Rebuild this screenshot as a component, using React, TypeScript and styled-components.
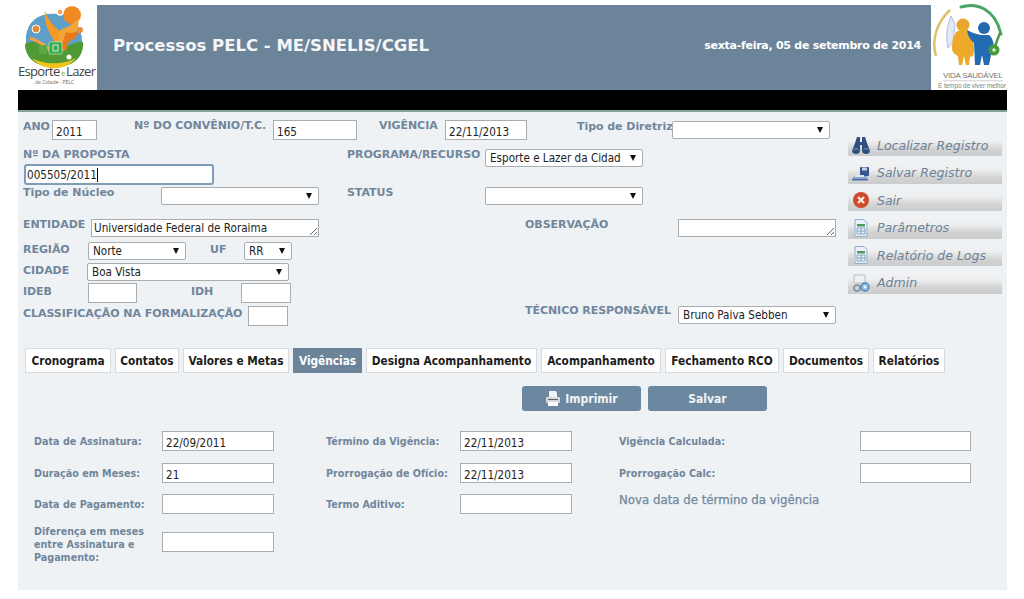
import React from 'react'
import styled, { createGlobalStyle } from 'styled-components'

const steel = '#6c8499'
const labelColor = '#71869b'
const bold = '"DejaVu Sans", Verdana, sans-serif'
const fieldFont = '"DejaVu Sans Condensed", "DejaVu Sans", sans-serif'

const GlobalStyle = createGlobalStyle`
  html, body {
    margin: 0;
    padding: 0;
    background: #fff;
  }
  body {
    width: 1024px;
    height: 599px;
    overflow: hidden;
    font-family: ${bold};
  }
`

const Page = styled.div`
  width: 989px;
  margin-left: 18px;
`

const Header = styled.header`
  display: flex;
  height: 90px;
`

const LogoSlot = styled.div<{ $w: number }>`
  width: ${({ $w }) => $w}px;
  flex-shrink: 0;
  height: 90px;
  svg {
    display: block;
  }
`

const Banner = styled.div`
  flex: 1;
  margin-top: 5px;
  background: ${steel};
  color: #fff;
  display: flex;
  align-items: center;
  justify-content: space-between;
  padding: 0 10px 4px 16px;
`

const Title = styled.h1`
  margin: 0;
  font-size: 16.5px;
  font-weight: 700;
  color: #f4f6f8;
`

const DateText = styled.span`
  font-size: 11px;
  font-weight: 700;
  letter-spacing: -0.27px;
  margin-bottom: 1px;
`

const BlackBar = styled.div`
  height: 20px;
  background: #000;
  border-bottom: 2px solid #84a09c;
`

const Panel = styled.main`
  height: 478px;
  background: #eef2f5;
`

const Top = styled.section`
  display: grid;
  grid-template-columns: 830px 154px;
  height: 226px;
`

const FormArea = styled.div`
  padding-top: 8px;
`

const Row = styled.div<{ $cols: string; $h: number }>`
  display: grid;
  grid-template-columns: ${({ $cols }) => $cols};
  height: ${({ $h }) => $h}px;
  align-items: start;
`

const Label = styled.label<{ $shift?: number }>`
  display: block;
  margin-top: ${({ $shift }) => $shift ?? 0}px;
  font-family: ${bold};
  font-size: 11px;
  line-height: 14px;
  font-weight: 700;
  letter-spacing: -0.05px;
  color: ${labelColor};
  white-space: nowrap;
`

const Field = styled.input<{ $w: number; $h?: number; $top?: number }>`
  display: block;
  box-sizing: border-box;
  width: ${({ $w }) => $w}px;
  height: ${({ $h }) => $h ?? 20}px;
  margin-top: ${({ $top }) => $top ?? 0}px;
  padding: 3px 3px 0;
  border: 1px solid #a9adb0;
  border-radius: 0;
  background: #fff;
  outline: none;
  font-family: ${fieldFont};
  font-size: 11.6px;
  color: #222;
`

const FocusField = styled.div`
  box-sizing: border-box;
  width: 190px;
  height: 21px;
  margin: 2px 0 0 1px;
  padding: 2px 0 0 1px;
  border: 2px solid #7d9cb8;
  border-radius: 3px;
  background: #fff;
  font-family: ${fieldFont};
  font-size: 11.6px;
  line-height: 14px;
  color: #222;
  display: flex;
`

const TextCaret = styled.span`
  width: 1px;
  height: 14px;
  background: #000;
`

const Area = styled.textarea<{ $w: number }>`
  display: block;
  box-sizing: border-box;
  width: ${({ $w }) => $w}px;
  height: 18px;
  padding: 1px 2px 0;
  border: 1px solid #a9adb0;
  border-radius: 0;
  background: #fff;
  outline: none;
  overflow: hidden;
  font-family: ${fieldFont};
  font-size: 11.6px;
  line-height: 15px;
  color: #222;
`

const SelectBox = styled.div<{ $w: number; $top?: number }>`
  box-sizing: border-box;
  width: ${({ $w }) => $w}px;
  height: 18px;
  margin-top: ${({ $top }) => $top ?? 0}px;
  padding: 0 6px 0 4px;
  display: flex;
  align-items: center;
  justify-content: space-between;
  border: 1px solid #a9adb0;
  border-radius: 2px;
  background: #fff;
  font-family: ${fieldFont};
  font-size: 11.6px;
  color: #222;
  white-space: nowrap;
`

const Caret = styled.span`
  width: 0;
  height: 0;
  border-left: 3.5px solid transparent;
  border-right: 3.5px solid transparent;
  border-top: 6px solid #111;
`

const Sidebar = styled.nav`
  display: flex;
  flex-direction: column;
  gap: 5.6px;
  padding-top: 22px;
`

const SideButton = styled.a`
  height: 22px;
  display: flex;
  align-items: center;
  gap: 6px;
  padding-left: 3px;
  background: linear-gradient(#f1f3f4 0%, #eceeef 35%, #d3d3d3 70%, #cbcccd 100%);
  font-family: ${bold};
  font-size: 12.5px;
  font-style: italic;
  color: #6d8296;
  white-space: nowrap;
  svg {
    flex-shrink: 0;
  }
`

const Tabs = styled.div`
  display: flex;
  gap: 4px;
  padding: 10px 0 0 7px;
`

const Tab = styled.button<{ $w: number; $active?: boolean }>`
  box-sizing: border-box;
  width: ${({ $w }) => $w}px;
  height: 25px;
  padding: 0;
  border: 1px solid ${({ $active }) => ($active ? steel : '#d9dcdf')};
  background: ${({ $active }) => ($active ? steel : '#fff')};
  color: ${({ $active }) => ($active ? '#fff' : '#1c1c1c')};
  font-family: ${fieldFont};
  font-size: 11.75px;
  font-weight: 700;
  white-space: nowrap;
`

const Actions = styled.div`
  display: flex;
  gap: 7px;
  padding: 13px 0 0 504px;
`

const ActionButton = styled.button`
  box-sizing: border-box;
  width: 119px;
  height: 25px;
  padding: 0;
  border: 0;
  border-radius: 3px;
  background: #6c88a0;
  color: #f2f4f6;
  font-family: ${fieldFont};
  font-size: 12px;
  font-weight: 700;
  display: flex;
  align-items: center;
  justify-content: center;
  gap: 4px;
`

const DatesGrid = styled.section`
  display: grid;
  grid-template-columns: 128px 112px 52px 134px 112px 47px 241px 111px;
  grid-template-rows: 32px 31px 30px 40px;
  padding: 20px 0 0 16px;
  align-items: start;
`

const DateLabel = styled.label<{ $tall?: boolean }>`
  padding-top: ${({ $tall }) => ($tall ? 1 : 4)}px;
  font-family: ${fieldFont};
  font-size: 10.7px;
  line-height: 13px;
  font-weight: 700;
  color: ${labelColor};
`

const Note = styled.span`
  font-family: ${fieldFont};
  font-size: 13.1px;
  line-height: 11px;
  font-weight: 500;
  color: ${labelColor};
  -webkit-text-stroke: 0.25px ${labelColor};
  white-space: nowrap;
`

const Select: React.FC<{ w: number; top?: number; value?: string }> = ({ w, top, value }) => (
  <SelectBox $w={w} $top={top}>
    <span>{value}</span>
    <Caret />
  </SelectBox>
)

const PelcLogo = () => (
  <svg width="79" height="90" viewBox="0 0 79 90">
    <path d="M8 36C10 20 22 12 40 14c14 2 24 12 24 28v6H8z" fill="#5d9fc9" />
    <path d="M7 44c10-6 18 2 30 4 10 2 20-8 28-6 1 14-8 25-28 25C18 67 7 58 7 44z" fill="#4f9a35" />
    <path d="M14 58c10 6 30 8 44 0-6 8-16 11-24 10-8 0-15-4-20-10z" fill="#f0c419" />
    <circle cx="54" cy="15" r="9" fill="#f08a24" />
    <circle cx="42" cy="12" r="3" fill="#f6a04c" stroke="#fff" strokeWidth="1.5" />
    <path d="M27 11c3 9 9 16 17 22l-4 14C33 36 25 24 27 11z" fill="#f59a23" />
    <path d="M42 30c6-2 12-5 18-11 2 8-2 17-10 22l-4 10-8-4z" fill="#f3a53a" />
    <path d="M48 32c4 2 9 1 14-2-2 6-6 10-11 11l-3 10-5-3z" fill="#e8791e" />
    <circle cx="62" cy="30" r="3" fill="#e7913d" />
    <circle cx="18" cy="29" r="4" fill="#e58a32" stroke="#fff" strokeWidth="1" />
    <path d="M12 38c7 3 13 5 20 12" stroke="#f0a248" strokeWidth="3" fill="none" />
    <rect x="31" y="42" width="13" height="12" rx="1" fill="#34a853" stroke="#b6e0a0" strokeWidth="0.8" />
    <rect x="35" y="45" width="5" height="6" fill="none" stroke="#d9f0c8" strokeWidth="1" />
    <rect x="21" y="45" width="8" height="9" rx="1" fill="#5ca845" />
    <circle cx="51" cy="57" r="2.5" fill="#fff" />
    <text x="0" y="76" fontFamily="'Open Sans', sans-serif" fontSize="13" fill="#444" textLength="78">
      Esporte<tspan fontSize="8" fill="#7aa83c"> e </tspan>Lazer
    </text>
    <text x="17" y="84" fontFamily="'Open Sans', sans-serif" fontSize="5" fill="#666">da Cidade - PELC</text>
  </svg>
)

const VidaLogo = () => (
  <svg width="76" height="90" viewBox="0 0 76 90">
    <path d="M30 7c16-5 34 2 40 27" stroke="#4aa564" strokeWidth="3" fill="none" strokeLinecap="round" />
    <path d="M19 10C6 22 0 40 5 56" stroke="#dcc06a" strokeWidth="2.5" fill="none" />
    <path d="M20 16c-3 8-6 18-3 32l5-6 2-18z" fill="#e4e8f2" stroke="#9fb0cf" strokeWidth="0.8" />
    <circle cx="32" cy="25" r="6.5" fill="#e9a62c" />
    <path d="M25 32c5-3 10-3 14 0 4 8 5 18 3 24l-3 1-1 8h-3l-2-9-2 9h-3l-1-9c-4-2-6-4-6-8 0-6 1-11 4-16z" fill="#eda92a" />
    <circle cx="53" cy="28" r="6" fill="#2469ad" />
    <path d="M36 30c6 3 9 4 14 5h8c4 3 5 9 5 14l-3 6-2 10h-5l-2-10-2 10h-5l-1-22c-3-3-6-6-7-13z" fill="#236bb0" />
    <circle cx="63" cy="50" r="5.5" fill="#4b9a3e" />
    <circle cx="63" cy="50" r="1.8" fill="#d8ecd0" />
    <path d="M64 46l5-13" stroke="#4b9a3e" strokeWidth="2.5" />
    <text x="12" y="78" fontFamily="'Liberation Sans', sans-serif" fontSize="8" fill="#777" textLength="60">VIDA SAUDÁVEL</text>
    <rect x="12" y="80.5" width="60" height="0.7" fill="#bbb" />
    <text x="7" y="88" fontFamily="'Liberation Sans', sans-serif" fontSize="6.5" fill="#7a8a78" textLength="68">É tempo de viver melhor</text>
  </svg>
)

const BinocularsIcon = () => (
  <svg width="20" height="18" viewBox="0 0 20 18">
    <path d="M6 1h3v5h2V1h3l2 6 3 8c0 2-2 3-4 3s-4-1-4-3V9H9v6c0 2-2 3-4 3s-4-1-4-3l3-8z" fill="#2f4f7f" />
    <path d="M2.5 14a3 3 0 0 1 5 0M12.500 14a3 3 0 0 1 5 0" stroke="#7e9cc9" fill="none" />
  </svg>
)

const SaveIcon = () => (
  <svg width="20" height="18" viewBox="0 0 20 18">
    <path d="M1 15l3-4h11l2 4z" fill="#8fa4c4" />
    <rect x="1" y="15" width="16" height="1.500" fill="#4e6ea3" />
    <rect x="9" y="3" width="9" height="9" rx="1" fill="#35558f" />
    <rect x="11" y="3.500" width="5" height="3" fill="#c5d3ea" />
    <rect x="4" y="11" width="9" height="2" fill="#dfe6f1" />
  </svg>
)

const CloseIcon = () => (
  <svg width="20" height="18" viewBox="0 0 20 18">
    <circle cx="10" cy="9" r="8" fill="#cf4a2b" />
    <path d="M7 6l6 6M13 6l-6 6" stroke="#f7e8d8" strokeWidth="2.4" />
  </svg>
)

const SheetIcon = () => (
  <svg width="20" height="18" viewBox="0 0 20 18">
    <path d="M4 0.500h9l3 3v14H4z" fill="#e9f0f7" stroke="#8fb0cf" />
    <rect x="6" y="5" width="8" height="2.500" fill="#4f9a62" />
    <path d="M6 9h8v6H6zM6 12h8M10 9v6" fill="none" stroke="#6f93b5" strokeWidth="0.8" />
  </svg>
)

const AdminIcon = () => (
  <svg width="20" height="18" viewBox="0 0 20 18">
    <path d="M3 1h11v8H3z" fill="#eef1f4" stroke="#b8c0c8" />
    <circle cx="6" cy="14" r="3" fill="none" stroke="#7e8e9e" strokeWidth="1.500" />
    <circle cx="14" cy="13" r="4" fill="#9cc0e2" stroke="#4a86bf" strokeWidth="1.500" />
    <circle cx="14" cy="13" r="1.200" fill="#fff" />
  </svg>
)

const PrintIcon = () => (
  <svg width="16" height="17" viewBox="0 0 16 17">
    <path d="M4 1h7l1 2v4H4z" fill="#f2f4f6" />
    <rect x="1" y="7" width="14" height="6" rx="1" fill="#d5dadf" />
    <rect x="3" y="12" width="10" height="4" fill="#fff" />
    <rect x="3" y="9" width="10" height="1" fill="#59636d" />
  </svg>
)

const sideItems = [
  { label: 'Localizar Registro', icon: <BinocularsIcon /> },
  { label: 'Salvar Registro', icon: <SaveIcon /> },
  { label: 'Sair', icon: <CloseIcon /> },
  { label: 'Parâmetros', icon: <SheetIcon /> },
  { label: 'Relatório de Logs', icon: <SheetIcon /> },
  { label: 'Admin', icon: <AdminIcon /> },
]

const tabs = [
  { label: 'Cronograma', w: 86 },
  { label: 'Contatos', w: 64 },
  { label: 'Valores e Metas', w: 106 },
  { label: 'Vigências', w: 69, active: true },
  { label: 'Designa Acompanhamento', w: 171 },
  { label: 'Acompanhamento', w: 120 },
  { label: 'Fechamento RCO', w: 114 },
  { label: 'Documentos', w: 86 },
  { label: 'Relatórios', w: 72 },
]

const App: React.FC = () => (
  <Page>
    <GlobalStyle />
    <Header>
      <LogoSlot $w={79}>
        <PelcLogo />
      </LogoSlot>
      <Banner>
        <Title>Processos PELC - ME/SNELIS/CGEL</Title>
        <DateText>sexta-feira, 05 de setembro de 2014</DateText>
      </Banner>
      <LogoSlot $w={76}>
        <VidaLogo />
      </LogoSlot>
    </Header>
    <BlackBar />
    <Panel>
      <Top>
        <FormArea>
          <Row $h={28} $cols="5px 29px 45px 37px 139px 84px 22px 66px 82px 50px 95px 158px">
            <span />
            <Label>ANO</Label>
            <Field $w={45} defaultValue="2011" />
            <span />
            <Label $shift={-1}>Nº DO CONVÊNIO/T.C.</Label>
            <Field $w={84} defaultValue="165" />
            <span />
            <Label $shift={-1}>VIGÊNCIA</Label>
            <Field $w={82} defaultValue="22/11/2013" />
            <span />
            <Label>Tipo de Diretriz</Label>
            <Select w={158} top={1} />
          </Row>
          <Row $h={39} $cols="5px 324px 138px 158px">
            <span />
            <div>
              <Label>Nº DA PROPOSTA</Label>
              <FocusField>
                005505/2011
                <TextCaret />
              </FocusField>
            </div>
            <Label>PROGRAMA/RECURSO</Label>
            <Select w={158} top={1} value="Esporte e Lazer da Cidad" />
          </Row>
          <Row $h={32} $cols="5px 138px 186px 138px 158px">
            <span />
            <Label $shift={-1}>Tipo de Núcleo</Label>
            <Select w={158} />
            <Label $shift={-1}>STATUS</Label>
            <Select w={158} />
          </Row>
          <Row $h={23} $cols="5px 68px 434px 153px 158px">
            <span />
            <Label $shift={-1}>ENTIDADE</Label>
            <Area $w={228} defaultValue="Universidade Federal de Roraima" />
            <Label $shift={-1}>OBSERVAÇÃO</Label>
            <Area $w={158} />
          </Row>
          <Row $h={21} $cols="5px 65px 122px 34px 48px">
            <span />
            <Label $shift={1}>REGIÃO</Label>
            <Select w={98} value="Norte" />
            <Label $shift={1}>UF</Label>
            <Select w={48} value="RR" />
          </Row>
          <Row $h={20} $cols="5px 64px 202px">
            <span />
            <Label $shift={1}>CIDADE</Label>
            <Select w={202} value="Boa Vista" />
          </Row>
          <Row $h={23} $cols="5px 65px 103px 50px 50px">
            <span />
            <Label $shift={2}>IDEB</Label>
            <Field $w={49} />
            <Label $shift={2}>IDH</Label>
            <Field $w={50} />
          </Row>
          <Row $h={22} $cols="5px 225px 277px 153px 158px">
            <span />
            <Label $shift={1}>CLASSIFICAÇÃO NA FORMALIZAÇÃO</Label>
            <Field $w={40} />
            <Label $shift={-2}>TÉCNICO RESPONSÁVEL</Label>
            <Select w={158} value="Bruno Paiva Sebben" />
          </Row>
        </FormArea>
        <Sidebar>
          {sideItems.map((item) => (
            <SideButton key={item.label}>
              {item.icon}
              {item.label}
            </SideButton>
          ))}
        </Sidebar>
      </Top>
      <Tabs>
        {tabs.map((tab) => (
          <Tab key={tab.label} $w={tab.w} $active={tab.active}>
            {tab.label}
          </Tab>
        ))}
      </Tabs>
      <Actions>
        <ActionButton>
          <PrintIcon />
          Imprimir
        </ActionButton>
        <ActionButton>Salvar</ActionButton>
      </Actions>
      <DatesGrid>
        <DateLabel>Data de Assinatura:</DateLabel>
        <Field $w={112} defaultValue="22/09/2011" />
        <span />
        <DateLabel>Término da Vigência:</DateLabel>
        <Field $w={112} defaultValue="22/11/2013" />
        <span />
        <DateLabel>Vigência Calculada:</DateLabel>
        <Field $w={111} />

        <DateLabel>Duração em Meses:</DateLabel>
        <Field $w={112} defaultValue="21" />
        <span />
        <DateLabel>Prorrogação de Ofício:</DateLabel>
        <Field $w={112} defaultValue="22/11/2013" />
        <span />
        <DateLabel>Prorrogação Calc:</DateLabel>
        <Field $w={111} />

        <DateLabel>Data de Pagamento:</DateLabel>
        <Field $w={112} />
        <span />
        <DateLabel>Termo Aditivo:</DateLabel>
        <Field $w={112} />
        <span />
        <Note>Nova data de término da vigência</Note>
        <span />

        <DateLabel $tall>
          Diferença em meses
          <br />
          entre Assinatura e
          <br />
          Pagamento:
        </DateLabel>
        <Field $w={112} $top={8} />
      </DatesGrid>
    </Panel>
  </Page>
)

export default App
